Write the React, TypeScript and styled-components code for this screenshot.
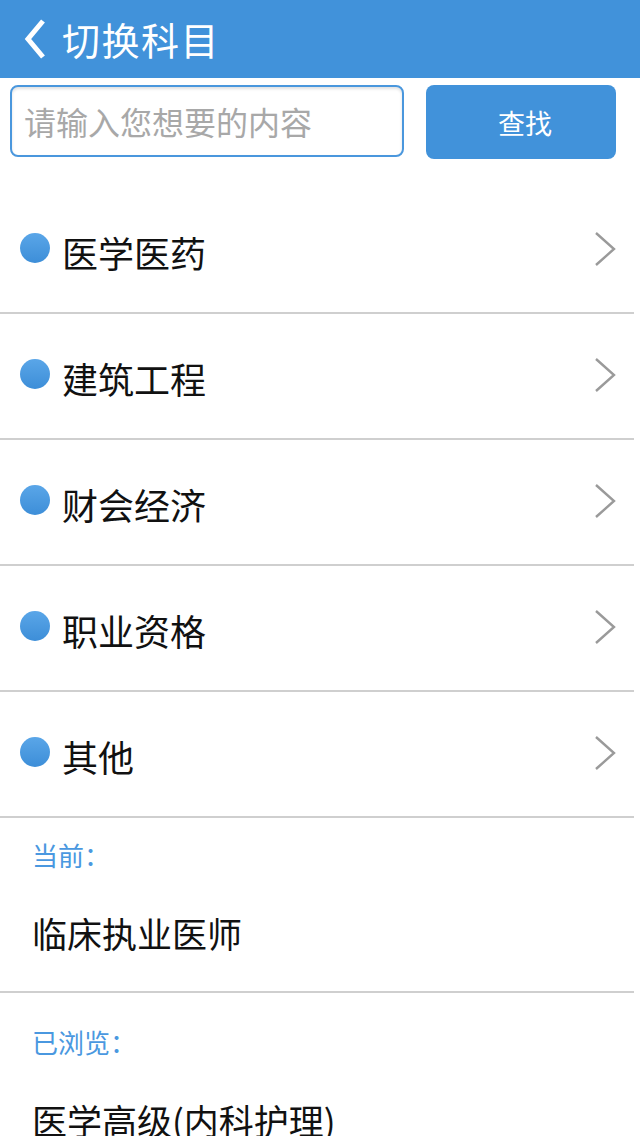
import React from "react";
import styled, { createGlobalStyle } from "styled-components";

const Global = createGlobalStyle`
  html, body { margin: 0; padding: 0; background: #fff; }
  body { font-family: "Noto Sans CJK SC", "Noto Sans", sans-serif; }
  * { box-sizing: border-box; }
`;

const Page = styled.div`
  width: 640px;
  height: 1136px;
  overflow: hidden;
  background: #fff;
`;

const Header = styled.header`
  height: 78px;
  background: #4192da;
  display: flex;
  align-items: center;
  padding-left: 24px;
  gap: 16px;
  color: #fff;
`;

const Title = styled.h1`
  margin: 0;
  font-size: 38px;
  font-weight: 400;
  line-height: 1;
  letter-spacing: 1.5px;
`;

const SearchRow = styled.div`
  display: flex;
  align-items: flex-start;
  padding: 7px 24px 0 10px;
  gap: 22px;
`;

const Input = styled.input`
  width: 394px;
  height: 72px;
  border: 2px solid #4a97dd;
  border-radius: 8px;
  padding: 0 12px;
  font-family: inherit;
  font-size: 32px;
  color: #333;
  outline: none;
  box-shadow: inset 0 2px 3px rgba(0, 0, 0, 0.12);
  &::placeholder { color: #a8a8a8; }
`;

const Button = styled.button`
  width: 190px;
  height: 74px;
  border: none;
  border-radius: 8px;
  background: #4192da;
  color: #fff;
  font-family: inherit;
  font-size: 27px;
  padding: 0 0 0 8px;
`;

const List = styled.ul`
  list-style: none;
  margin: 29px 0 0;
  padding: 0;
  width: 634px;
`;

const Row = styled.li`
  height: 126px;
  border-bottom: 2px solid #cfcfcf;
  display: flex;
  align-items: center;
  padding: 0 18px 0 20px;
`;

const Dot = styled.span`
  width: 30px;
  height: 30px;
  border-radius: 50%;
  background: linear-gradient(#5aa6e8, #3d8ed8);
  margin-right: 12px;
  margin-top: -4px;
  flex-shrink: 0;
`;

const RowText = styled.span`
  flex: 1;
  font-size: 36px;
  color: #111;
  line-height: 1;
  margin-top: 4px;
`;

const Section = styled.section<{ $top: number }>`
  width: 634px;
  padding: ${(p) => p.$top}px 0 40px 32px;
  border-bottom: 2px solid #cfcfcf;
`;

const Label = styled.div`
  font-size: 26px;
  line-height: 26px;
  color: #4a98e0;
`;

const Value = styled.div`
  margin-top: 47px;
  font-size: 35px;
  line-height: 36px;
  color: #111;
`;

const Back = () => (
  <svg width="22" height="42" viewBox="0 0 22 42">
    <path d="M19 3 L4 21 L19 39" fill="none" stroke="#fff" strokeWidth="5" strokeLinejoin="miter" />
  </svg>
);

const Chevron = () => (
  <svg width="22" height="34" viewBox="0 0 22 34" style={{ marginTop: -2 }}>
    <path d="M2 1 L20 17 L2 33" fill="none" stroke="#9a9a9a" strokeWidth="2.4" />
  </svg>
);

const categories = ["医学医药", "建筑工程", "财会经济", "职业资格", "其他"];

export default function App() {
  return (
    <Page>
      <Global />
      <Header>
        <Back />
        <Title>切换科目</Title>
      </Header>
      <SearchRow>
        <Input placeholder="请输入您想要的内容" />
        <Button>查找</Button>
      </SearchRow>
      <List>
        {categories.map((c) => (
          <Row key={c}>
            <Dot />
            <RowText>{c}</RowText>
            <Chevron />
          </Row>
        ))}
      </List>
      <Section $top={24}>
        <Label>当前：</Label>
        <Value>临床执业医师</Value>
      </Section>
      <Section $top={36}>
        <Label>已浏览：</Label>
        <Value>医学高级(内科护理)</Value>
      </Section>
    </Page>
  );
}
